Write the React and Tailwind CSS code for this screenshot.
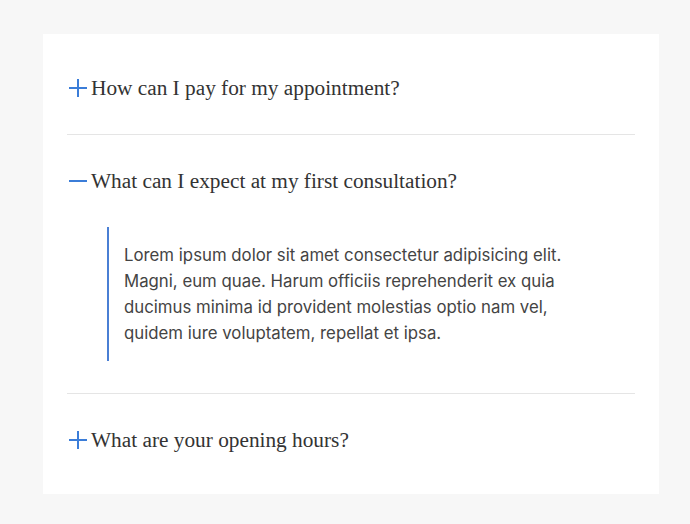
import React, { useState } from 'react';

const faqs = [
  {
    q: 'How can I pay for my appointment?',
    a: 'Lorem ipsum dolor sit amet consectetur adipisicing elit. Magni, eum quae. Harum officiis reprehenderit ex quia ducimus minima id provident molestias optio nam vel, quidem iure voluptatem, repellat et ipsa.',
  },
  {
    q: 'What can I expect at my first consultation?',
    a: 'Lorem ipsum dolor sit amet consectetur adipisicing elit. Magni, eum quae. Harum officiis reprehenderit ex quia ducimus minima id provident molestias optio nam vel, quidem iure voluptatem, repellat et ipsa.',
  },
  {
    q: 'What are your opening hours?',
    a: 'Lorem ipsum dolor sit amet consectetur adipisicing elit. Magni, eum quae. Harum officiis reprehenderit ex quia ducimus minima id provident molestias optio nam vel, quidem iure voluptatem, repellat et ipsa.',
  },
];

// Icono + / − dibujado a mano
const ToggleIcon = ({ open }) => (
  <svg width="22" height="22" viewBox="0 0 22 22" className="shrink-0 text-[#3b7dd8]">
    <line x1="2" y1="11" x2="20" y2="11" stroke="currentColor" strokeWidth="2" />
    {!open && <line x1="11" y1="2" x2="11" y2="20" stroke="currentColor" strokeWidth="2" />}
  </svg>
);

const FaqItem = ({ item, open, onToggle, last }) => (
  <div className={`py-8 ${last ? '' : 'border-b border-[#e5e5e5]'}`}>
    <button onClick={onToggle} className="flex items-center gap-[2px] text-left cursor-pointer">
      <ToggleIcon open={open} />
      <span className="text-[21.3px] leading-[28px] text-[#333] font-['Liberation_Serif',serif]">{item.q}</span>
    </button>
    {open && (
      <div className="mt-8 ml-10 border-l-2 border-[#4a7fd4] pl-[15px] py-[15px] w-[475px]">
        <p className="text-[16.8px] leading-[26px] text-[#444] font-['Inter',sans-serif]">{item.a}</p>
      </div>
    )}
  </div>
);

export default function App() {
  const [openIdx, setOpenIdx] = useState(1);

  return (
    <div className="min-h-screen bg-[#f7f7f7] pt-[34px] px-[43px]">
      <div className="bg-white px-6 py-2 w-[616px]">
        {faqs.map((item, i) => (
          <FaqItem
            key={i}
            item={item}
            open={openIdx === i}
            last={i === faqs.length - 1}
            onToggle={() => setOpenIdx(openIdx === i ? null : i)}
          />
        ))}
      </div>
    </div>
  );
}
